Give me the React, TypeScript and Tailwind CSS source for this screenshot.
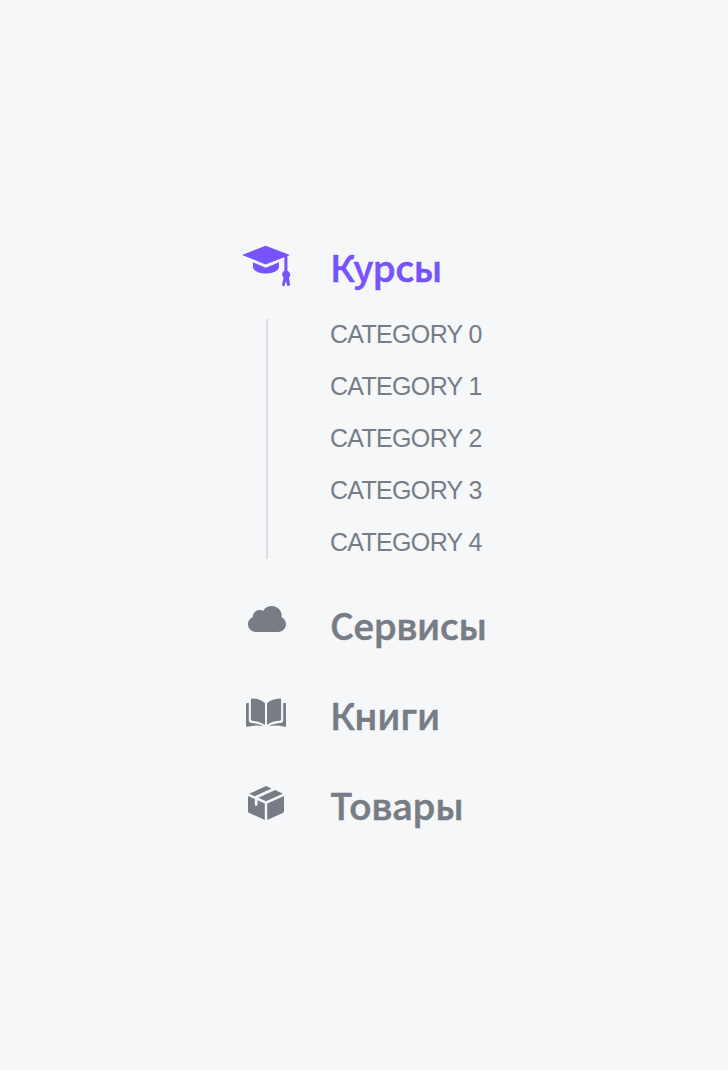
import type { ReactNode } from 'react';

function CapIcon() {
  return (
    <svg width="52" height="44" viewBox="0 0 52 44" fill="currentColor">
      <path d="M2 10 25.6.8 50 10 25.6 19.4Z" />
      <path d="M13 17.2 25.8 22.8 39 17.2V21.8C38.5 30.6 13.5 30.6 13 21.8Z" />
      <path d="M44.4 10.5h3v15.2a4.3 4.3 0 0 1 1.6 7l1.2 7.6-2.8 1-1.5-5-1.5 5-2.6-1 1.8-7.6a4.3 4.3 0 0 1 .8-7Z" />
    </svg>
  );
}

function CloudIcon() {
  return (
    <svg width="38" height="26" viewBox="0 0 38 26" fill="currentColor">
      <path d="M8 26C3.2 26 0 22.3 0 18.3 0 14.8 2.2 12 4.8 11.2 4.6 7 8.3 3.6 12.5 4.1c1 .1 1.8.3 2.5.8C17 1.8 20 0 23.5 0c6.5 0 11 5.2 10 11.2 2.7 1 4.5 3.8 4.5 6.9 0 4.4-3.4 7.9-7.7 7.9Z" />
    </svg>
  );
}

function BookIcon() {
  return (
    <svg width="40" height="30" viewBox="0 0 40 30" fill="currentColor">
      <path d="M4.9 1.6C4.9.8 5.5.5 6.3.5c5 .2 9.5 1.6 12.7 4.8v21.8C15 24 10.5 23 6.2 22.8c-.8 0-1.3-.5-1.3-1.2Z" />
      <path d="M35.1 1.6c0-.8-.6-1.1-1.4-1.1-5 .2-9.5 1.6-12.7 4.8v21.8c4-3.1 8.5-4.1 12.8-4.3.8 0 1.3-.5 1.3-1.2Z" />
      <path d="M0 6.2C0 5.4.6 5 1.3 5H2.8v17.2c0 1.7 1.2 2.7 2.8 2.8 4 .2 8 1.1 11.2 3.2C11.2 27 6.5 27.5 1.5 28.8.7 29 0 28.6 0 27.8Z" />
      <path d="M40 6.2c0-.8-.6-1.2-1.3-1.2h-1.5v17.2c0 1.7-1.2 2.7-2.8 2.8-4 .2-8 1.1-11.2 3.2 5.6-1.2 10.3-.7 15.3.6.8.2 1.5-.2 1.5-1Z" />
    </svg>
  );
}

function BoxIcon() {
  return (
    <svg width="36" height="34" viewBox="0 0 36 34" fill="currentColor">
      <path d="M0 9.9 6.8 13v5.6c0 .8.5 1.3 1.3 1.3s1.4-.5 1.4-1.3v-4.3l7.3 3.3V34L1.2 26.9C.4 26.5 0 26 0 25.2Z" />
      <path d="M36 9.9 19.2 17.6V34l15.6-7.1c.8-.4 1.2-.9 1.2-1.7Z" />
      <path d="M1.3 7.7 17 .5c.8-.4 1.4-.4 2.2 0l4.4 1.9L6.7 10.2Z" />
      <path d="M10.3 11.8 27.3 4l7.6 3.7L18 15.3Z" />
    </svg>
  );
}

function MenuItem({ icon, children, active = false }: { icon: ReactNode; children: ReactNode; active?: boolean }) {
  return (
    <a className={`flex h-14 items-start ${active ? 'text-[#7653fc]' : 'text-[#787d85]'}`}>
      <span className="flex w-[90px] shrink-0 justify-center pr-[38px]">{icon}</span>
      <span className="whitespace-nowrap font-['Noto_Sans_CJK_SC','Noto_Sans',sans-serif] text-[37px] font-medium leading-[48px] tracking-[-0.7px] [-webkit-text-stroke:0.5px_currentColor]">
        {children}
      </span>
    </a>
  );
}

export default function App() {
  return (
    <div className="h-[1070px] bg-[#f5f7f9] pl-60 pt-[242px]">
      <nav>
        <MenuItem active icon={<span className="pt-[3px]"><CapIcon /></span>}>Курсы</MenuItem>
        <div className="ml-[26px] mt-[21px] h-60 border-l-2 border-[#dbdde0] pl-[62px]">
          <ul className="flex -translate-y-[11px] flex-col font-['Liberation_Sans',Arial,sans-serif] text-[25px] leading-[52px] text-[#787d85]">
            {[0, 1, 2, 3, 4].map((n) => (
              <li key={n} className="h-[52px] whitespace-nowrap tracking-[-0.68px]">CATEGORY {n}</li>
            ))}
          </ul>
        </div>
        <div className="mt-[41px] flex flex-col gap-[34px]">
          <MenuItem icon={<span className="pl-[2px] pt-[6px]"><CloudIcon /></span>}>Сервисы</MenuItem>
          <MenuItem icon={<span className="pt-[8px]"><BookIcon /></span>}>Книги</MenuItem>
          <MenuItem icon={<span className="pt-[6px]"><BoxIcon /></span>}>Товары</MenuItem>
        </div>
      </nav>
    </div>
  );
}
